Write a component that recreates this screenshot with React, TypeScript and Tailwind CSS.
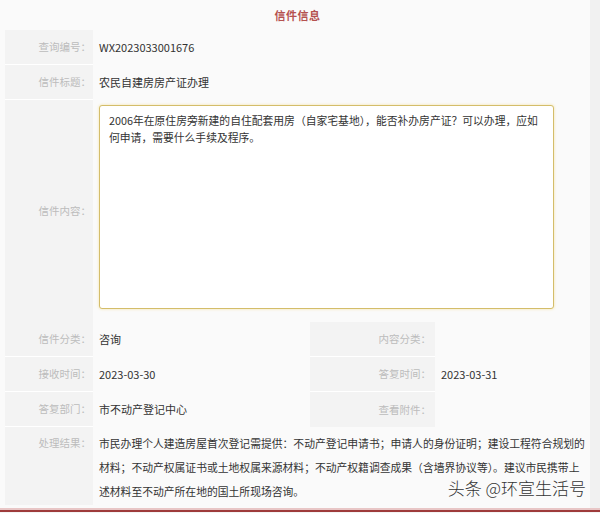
const font = {
  fontFamily: '"Noto Sans CJK SC", "Noto Sans", sans-serif',
};

function Label({ children, className = "" }: { children: React.ReactNode; className?: string }) {
  return (
    <div
      className={`flex items-center justify-end bg-[#f3f3f3] pr-[2px] text-[10.5px] text-[#bcbcbc] ${className}`}
    >
      {children}
    </div>
  );
}

function Value({ children, className = "" }: { children?: React.ReactNode; className?: string }) {
  return (
    <div className={`flex items-center pl-[6px] text-[11px] text-[#333] ${className}`}>
      {children}
    </div>
  );
}

export default function App() {
  return (
    <div className="flex h-[513px] w-[600px] flex-col overflow-hidden bg-[#f4f4f4]" style={font}>
      <div className="flex flex-1">
        <div className="relative w-[590px] bg-[#fafafa] pl-[5px]">
          {/* 标题 */}
          <div className="flex h-[30px] items-center justify-center text-[11px] font-bold tracking-[0.5px] text-[#b5514f]">
            信件信息
          </div>

          <div className="grid grid-cols-[88px_1fr]">
            <Label className="h-[35px] border-b border-white">查询编号：</Label>
            <Value>WX2023033001676</Value>

            <Label className="h-[35px] border-b border-white">信件标题：</Label>
            <Value>农民自建房房产证办理</Value>

            <Label className="h-[222px]">信件内容：</Label>
            <div className="pl-[6px] pr-[36px] pt-[5px]">
              <div className="h-[204px] whitespace-nowrap rounded-[3px] border border-[#d4bd6a] bg-white pl-[9px] pt-[6px] text-[10.8px] leading-[17px] text-[#333] shadow-[0_0_3px_#f3e3a4]">
                2006年在原住房旁新建的自住配套用房（自家宅基地），能否补办房产证？可以办理，应如
                <br />
                何申请，需要什么手续及程序。
              </div>
            </div>
          </div>

          <div className="grid grid-cols-[88px_217px_125px_1fr]">
            <Label className="h-[35px] border-b border-white">信件分类：</Label>
            <Value>咨询</Value>
            <Label className="border-b border-white pr-[4px]">内容分类：</Label>
            <Value />

            <Label className="h-[35px] border-b border-white">接收时间：</Label>
            <Value>2023-03-30</Value>
            <Label className="border-b border-white pr-[4px]">答复时间：</Label>
            <Value>2023-03-31</Value>

            <Label className="h-[35px] border-b border-white">答复部门：</Label>
            <Value>市不动产登记中心</Value>
            <Label className="pr-[4px]">查看附件：</Label>
            <Value />
          </div>

          <div className="grid grid-cols-[88px_1fr]">
            <div className="flex h-[78px] justify-end bg-[#f3f3f3] pr-[2px] pt-[4px] text-[10.5px] leading-[24px] text-[#bcbcbc]">
              处理结果：
            </div>
            <div className="whitespace-nowrap pl-[6px] pt-[4px] text-[10.8px] leading-[24px] text-[#333]">
              市民办理个人建造房屋首次登记需提供：不动产登记申请书；申请人的身份证明；建设工程符合规划的
              <br />
              材料；不动产权属证书或土地权属来源材料；不动产权籍调查成果（含墙界协议等）。建议市民携带上
              <br />
              述材料至不动产所在地的国土所现场咨询。
            </div>
          </div>

          {/* 水印 */}
          <div className="absolute bottom-[8px] right-[4px] text-[17px] font-light text-[#333] [text-shadow:0_0_3px_#fff]">
            头条 @环宣生活号
          </div>
        </div>
        <div className="flex-1 bg-[#f1f1f1]" />
      </div>
      <div className="h-[2px] bg-[#e8c6c6]" />
      <div className="h-[2px] bg-[#9e3b3b]" />
      <div className="h-[1px] bg-[#f4f4f4]" />
    </div>
  );
}
